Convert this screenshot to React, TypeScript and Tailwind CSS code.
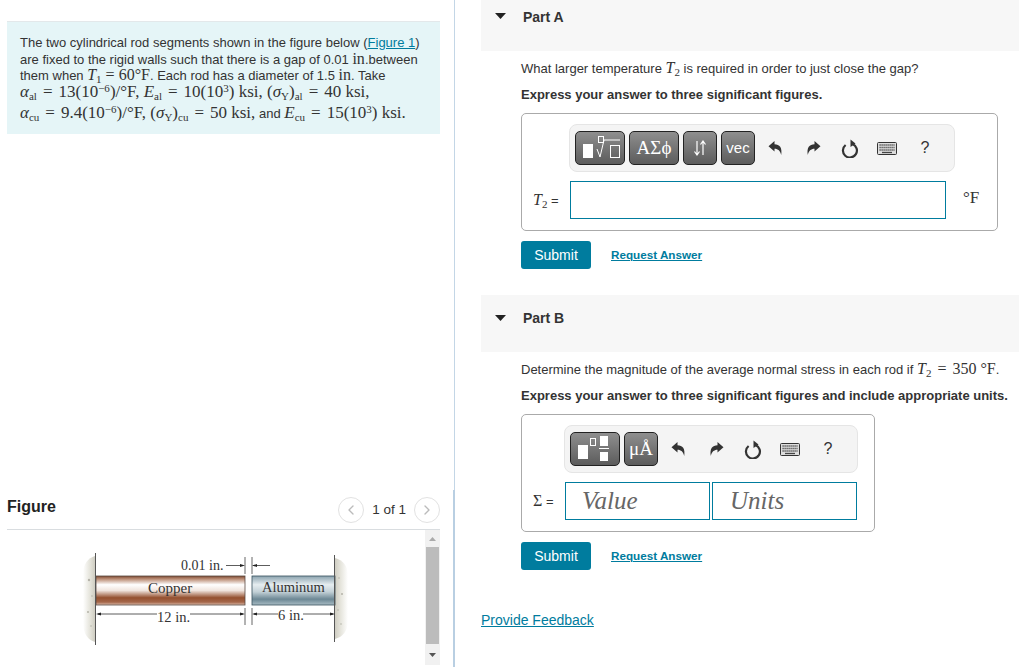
import type { ReactNode } from 'react';
import { ChevronLeft, ChevronRight } from 'lucide-react';

const sans = "font-['Liberation_Sans',Arial,sans-serif]";
const serif = "font-['Liberation_Serif','Times_New_Roman',serif]";

function M({ big, children }: { big?: boolean; children: ReactNode }) {
  return <span className={`${serif} ${big ? 'text-[17px]' : 'text-[16px]'} text-[#333]`}>{children}</span>;
}

function I({ children }: { children: ReactNode }) {
  return <i className={serif}>{children}</i>;
}

function Eq({ wide }: { wide?: boolean }) {
  return <span className={wide ? 'mx-[6px]' : 'mx-[4px]'}>=</span>;
}

function Sub({ children }: { children: ReactNode }) {
  return <sub className="text-[11px] leading-none bottom-[-3px]">{children}</sub>;
}

function Sup({ children }: { children: ReactNode }) {
  return <sup className="text-[11px] leading-none top-[-5px]">{children}</sup>;
}

function ToolButton({ width, children }: { width: string; children: ReactNode }) {
  return (
    <div className={`${width} h-[34px] shrink-0 rounded-[5px] border border-[#222] bg-gradient-to-b from-[#8f8f8f] to-[#5c5c5c] flex items-center justify-center text-white`}>
      {children}
    </div>
  );
}

function UndoIcon({ flip }: { flip?: boolean }) {
  return (
    <svg width="15" height="16" viewBox="0 0 15 16" className={flip ? '-scale-x-100' : ''}>
      <path d="M0.5 6.2 L6.5 1 V4.2 C11.5 4.2 14.5 7.5 13.2 15 C12.2 11 10.2 8.8 6.5 8.8 V11.5 Z" fill="#333" />
    </svg>
  );
}

function ResetIcon() {
  return (
    <svg width="18" height="19" viewBox="0 0 18 19">
      <path d="M4.6 6 A7 7 0 1 0 11.5 5" fill="none" stroke="#333" strokeWidth="2.2" />
      <path d="M9.5 0.5 L14.5 4.5 L9.5 8 Z" fill="#333" />
    </svg>
  );
}

function KeyboardIcon() {
  return (
    <svg width="20" height="13" viewBox="0 0 20 13">
      <rect x="0.5" y="0.5" width="19" height="12" rx="1" fill="#ddd" stroke="#333" />
      <path d="M2.5 3h15M2.5 5.5h15M2.5 8h15" stroke="#444" strokeWidth="1.3" strokeDasharray="1.2 0.8" />
      <path d="M5 10.5h10" stroke="#444" strokeWidth="1.3" />
    </svg>
  );
}

function ToolIcons() {
  return (
    <div className="flex items-center text-[#333] -ml-[3px]">
      <div className="w-[38px] flex justify-center"><UndoIcon /></div>
      <div className="w-[38px] flex justify-center"><UndoIcon flip /></div>
      <div className="w-[36px] flex justify-center"><ResetIcon /></div>
      <div className="w-[38px] flex justify-center"><KeyboardIcon /></div>
      <div className="w-[38px] flex justify-center text-[16px]">?</div>
    </div>
  );
}

function SubmitRow() {
  return (
    <div className="flex items-center gap-5 mt-[10px]">
      <button className="w-[70px] h-[28px] rounded-[3px] bg-[#007c9e] text-white text-[14px]">Submit</button>
      <a className="text-[11.7px] font-bold text-[#007c9e] underline">Request Answer</a>
    </div>
  );
}

function PartHeader({ label, height, arrowTop, labelTop }: { label: string; height: string; arrowTop: string; labelTop: string }) {
  return (
    <div className={`${height} bg-[#f7f7f7] flex pl-[14px]`}>
      <svg width="11" height="6" viewBox="0 0 11 6" className={arrowTop}>
        <path d="M0 0h11L5.5 6z" fill="#222" />
      </svg>
      <span className={`${labelTop} ml-[17px] text-[14px] leading-[18px] font-bold text-[#333]`}>{label}</span>
    </div>
  );
}

function RodFigure() {
  return (
    <svg width="280" height="100" viewBox="0 0 280 100" className={serif}>
      <defs>
        <linearGradient id="copper" x1="0" y1="0" x2="0" y2="1">
          <stop offset="0" stopColor="#7d4a32" />
          <stop offset="0.1" stopColor="#b98a72" />
          <stop offset="0.3" stopColor="#ffffff" />
          <stop offset="0.5" stopColor="#f0e4dd" />
          <stop offset="0.75" stopColor="#94502f" />
          <stop offset="0.9" stopColor="#a5674a" />
          <stop offset="1" stopColor="#dcbcac" />
        </linearGradient>
        <linearGradient id="alum" x1="0" y1="0" x2="0" y2="1">
          <stop offset="0" stopColor="#8aa2ae" />
          <stop offset="0.3" stopColor="#e6edf0" />
          <stop offset="0.55" stopColor="#c2d0d6" />
          <stop offset="0.8" stopColor="#6c8794" />
          <stop offset="1" stopColor="#a9bcc4" />
        </linearGradient>
        <linearGradient id="wallL" x1="0" y1="0" x2="1" y2="0">
          <stop offset="0" stopColor="#ffffff" />
          <stop offset="0.6" stopColor="#e4e3da" />
          <stop offset="1" stopColor="#cfcdc2" />
        </linearGradient>
        <linearGradient id="wallR" x1="0" y1="0" x2="1" y2="0">
          <stop offset="0" stopColor="#cfcdc2" />
          <stop offset="0.4" stopColor="#e4e3da" />
          <stop offset="1" stopColor="#ffffff" />
        </linearGradient>
      </defs>
      <path d="M15 6 C8 8 3 14 3 24 V72 C3 84 8 90 15 92 Z" fill="url(#wallL)" />
      <path d="M255 8 C263 10 268 16 268 26 V70 C268 82 262 87 255 89 Z" fill="url(#wallR)" />
      <g fill="#b5b3a8">
        <circle cx="9" cy="30" r="1.2" />
        <circle cx="12" cy="46" r="0.8" />
        <circle cx="8" cy="62" r="1" />
        <circle cx="11" cy="76" r="0.8" />
        <circle cx="259" cy="28" r="0.8" />
        <circle cx="262" cy="44" r="1" />
        <circle cx="258" cy="60" r="0.8" />
        <circle cx="261" cy="74" r="0.8" />
      </g>
      <rect x="16" y="26" width="149" height="29" fill="url(#copper)" stroke="#5a4a42" strokeWidth="0.8" />
      <rect x="172" y="26" width="83" height="29" fill="url(#alum)" stroke="#38505c" strokeWidth="0.8" />
      <path d="M15.5 3V95M254.5 5V92" stroke="#555" strokeWidth="1" />
      <path d="M165 7V24M172 7V24M165 58V75M172 58V75" stroke="#666" strokeWidth="1" />
      <g stroke="#333" strokeWidth="0.8">
        <path d="M146 15.5H163M173 15.5H190" />
        <path d="M18 64H77M110 64H163M174 64H198M223 64H253" />
      </g>
      <g fill="#222">
        <path d="M165 15.5l-5-1.5v3zM172 15.5l5-1.5v3zM16 64l5-1.5v3zM165 64l-5-1.5v3zM172 64l5-1.5v3zM255 64l-5-1.5v3z" />
      </g>
      <g fill="#333">
        <text x="101" y="19.5" fontSize="14">0.01 in.</text>
        <text x="68" y="43" fontSize="15">Copper</text>
        <text x="182" y="42" fontSize="14.5">Aluminum</text>
        <text x="77" y="72" fontSize="14.5">12 in.</text>
        <text x="198" y="70" fontSize="14.5">6 in.</text>
      </g>
    </svg>
  );
}

function LeftPanel() {
  return (
    <div className="w-[453px] shrink-0 h-full pl-[7px] pr-[13px] pt-[21px]">
      <div className="h-[113px] bg-[#e5f5f7] border-t border-[#e3e8ea] pl-[13px] pt-[13px] text-[13px] text-[#333]">
        <div className="h-[16px] leading-[16px] whitespace-nowrap">
          The two cylindrical rod segments shown in the figure below (
          <a className="text-[#007c9e] underline">Figure 1</a>)
        </div>
        <div className="h-[16px] leading-[16px] whitespace-nowrap">
          are fixed to the rigid walls such that there is a gap of 0.01 <M>in</M>.between
        </div>
        <div className="h-[16px] leading-[16px] whitespace-nowrap">
          them when <M><I>T</I><Sub>1</Sub><Eq />60°F</M>. Each rod has a diameter of 1.5 <M>in</M>. Take
        </div>
        <div className="h-[18px] leading-[18px] whitespace-nowrap">
          <M big><I>α</I><Sub>al</Sub><Eq wide />13(10<Sup>−6</Sup>)/°F, <I>E</I><Sub>al</Sub><Eq wide />10(10<Sup>3</Sup>) ksi, (<I>σ</I><Sub>Y</Sub>)<Sub>al</Sub><Eq wide />40 ksi,</M>
        </div>
        <div className="h-[18px] leading-[18px] mt-[3px] whitespace-nowrap">
          <M big><I>α</I><Sub>cu</Sub><Eq wide />9.4(10<Sup>−6</Sup>)/°F, (<I>σ</I><Sub>Y</Sub>)<Sub>cu</Sub><Eq wide />50 ksi,</M> and <M big><I>E</I><Sub>cu</Sub><Eq wide />15(10<Sup>3</Sup>) ksi.</M>
        </div>
      </div>

      <div className="mt-[363px] h-[33px] flex items-start justify-between border-b border-[#d9dde0]">
        <span className="text-[16px] font-bold text-[#222] leading-[20px]">Figure</span>
        <div className="flex items-center gap-[8px] text-[13.5px] text-[#333]">
          <div className="w-[26px] h-[26px] rounded-full border border-[#e2e2e2] flex items-center justify-center">
            <ChevronLeft size={16} className="text-[#bbb]" />
          </div>
          <span>1 of 1</span>
          <div className="w-[26px] h-[26px] rounded-full border border-[#e2e2e2] flex items-center justify-center">
            <ChevronRight size={16} className="text-[#bbb]" />
          </div>
        </div>
      </div>

      <div className="flex">
        <div className="flex-1 pl-[73px] pt-[20px]">
          <RodFigure />
        </div>
        <div className="w-[15px] h-[135px] bg-[#f1f1f1] flex flex-col items-center">
          <div className="h-[17px] flex items-center">
            <svg width="7" height="4" viewBox="0 0 7 4"><path d="M0 4h7L3.5 0z" fill="#aaa" /></svg>
          </div>
          <div className="w-[13px] h-[97px] bg-[#bcbcbc]" />
          <div className="h-[21px] flex items-center">
            <svg width="7" height="4" viewBox="0 0 7 4"><path d="M0 0h7L3.5 4z" fill="#555" /></svg>
          </div>
        </div>
      </div>
    </div>
  );
}

function Divider() {
  return (
    <div className="w-[2px] shrink-0 h-full flex flex-col items-end">
      <div className="w-px h-[490px] bg-[#c3d6e6]" />
      <div className="w-[2px] flex-1 bg-[#b9cfe2]" />
    </div>
  );
}

function PartA() {
  return (
    <>
      <PartHeader label="Part A" height="h-[51px]" arrowTop="mt-[13px]" labelTop="mt-[8px]" />
      <div className="pl-[40px]">
        <p className="mt-[8px] h-[18px] text-[13px] leading-[18px] text-[#333]">
          What larger temperature <M><I>T</I><Sub>2</Sub></M> is required in order to just close the gap?
        </p>
        <p className="mt-[8px] h-[18px] text-[13px] leading-[20px] font-bold text-[#333]">
          Express your answer to three significant figures.
        </p>
        <div className="mt-[10px] w-[477px] h-[118px] border border-[#aaa] rounded-[5px] pl-[47px] pt-[10px]">
          <div className="w-[386px] h-[48px] rounded-[8px] bg-[#f4f4f4] border border-[#e5e5e5] flex items-center pl-[5px] gap-[4px]">
            <ToolButton width="w-[50px]">
              <svg width="42" height="28" viewBox="0 0 42 28">
                <rect x="4" y="10" width="10" height="14" fill="#fff" />
                <rect x="19.5" y="2.5" width="5" height="6" fill="none" stroke="#fff" />
                <path d="M18 15l3 8 4-17h16" fill="none" stroke="#fff" />
                <rect x="31.5" y="11.5" width="9" height="12" fill="none" stroke="#fff" />
              </svg>
            </ToolButton>
            <ToolButton width="w-[50px]"><span className={`${serif} text-[19px]`}>ΑΣϕ</span></ToolButton>
            <ToolButton width="w-[34px]">
              <svg width="16" height="18" viewBox="0 0 16 18" fill="none" stroke="#fff" strokeWidth="1.2">
                <path d="M5 2v13M2.5 12.5L5 16l2.5-3.5M11 16V3M8.5 5.5L11 2l2.5 3.5" />
              </svg>
            </ToolButton>
            <ToolButton width="w-[34px]"><span className="text-[15px]">vec</span></ToolButton>
            <ToolIcons />
          </div>
          <div className="flex items-center mt-[9px] -ml-[36px]">
            <span className="w-[37px] text-[13px] text-[#333] whitespace-nowrap"><M><I>T</I><Sub>2</Sub></M> =</span>
            <div className="w-[376px] h-[38px] border border-[#007c9e] bg-white" />
            <span className={`${serif} ml-[17px] -mt-[4px] text-[17px] text-[#333]`}>°F</span>
          </div>
        </div>
        <SubmitRow />
      </div>
    </>
  );
}

function PartB() {
  return (
    <>
      <div className="mt-[26px]">
        <PartHeader label="Part B" height="h-[57px]" arrowTop="mt-[20px]" labelTop="mt-[14px]" />
      </div>
      <div className="pl-[40px]">
        <p className="mt-[8px] h-[18px] text-[13px] leading-[18px] text-[#333] whitespace-nowrap">
          Determine the magnitude of the average normal stress in each rod if <M><I>T</I><Sub>2</Sub><Eq wide />350 °F</M>.
        </p>
        <p className="mt-[8px] h-[18px] text-[13px] leading-[20px] font-bold text-[#333] whitespace-nowrap">
          Express your answer to three significant figures and include appropriate units.
        </p>
        <div className="mt-[10px] w-[354px] h-[118px] border border-[#aaa] rounded-[5px] pl-[42px] pt-[10px]">
          <div className="w-[294px] h-[48px] rounded-[8px] bg-[#f4f4f4] border border-[#e5e5e5] flex items-center pl-[5px] gap-[4px]">
            <ToolButton width="w-[50px]">
              <svg width="42" height="28" viewBox="0 0 42 28">
                <rect x="4" y="10" width="10" height="14" fill="#fff" />
                <rect x="16.5" y="3.5" width="5" height="7" fill="none" stroke="#fff" />
                <rect x="26" y="1" width="8" height="10" fill="#fff" />
                <path d="M25 13.5h10" stroke="#fff" />
                <rect x="26" y="17" width="8" height="9" fill="#fff" />
              </svg>
            </ToolButton>
            <ToolButton width="w-[34px]"><span className={`${serif} text-[19px]`}>μÅ</span></ToolButton>
            <ToolIcons />
          </div>
          <div className="flex items-center mt-[9px] -ml-[31px] gap-[2px]">
            <span className="w-[30px] text-[13px] text-[#333] whitespace-nowrap"><M>Σ</M> =</span>
            <div className={`${serif} w-[145px] h-[38px] border border-[#007c9e] pl-[16px] flex items-center italic text-[25px] text-[#666]`}>Value</div>
            <div className={`${serif} w-[145px] h-[38px] border border-[#007c9e] pl-[17px] flex items-center italic text-[25px] text-[#666]`}>Units</div>
          </div>
        </div>
        <SubmitRow />
      </div>
    </>
  );
}

export default function App() {
  return (
    <div className={`${sans} w-[1019px] h-[667px] flex overflow-hidden bg-white`}>
      <LeftPanel />
      <Divider />
      <div className="flex-1 pl-[26px]">
        <PartA />
        <PartB />
        <a className="block mt-[40px] text-[14px] text-[#007c9e] underline">Provide Feedback</a>
      </div>
    </div>
  );
}
